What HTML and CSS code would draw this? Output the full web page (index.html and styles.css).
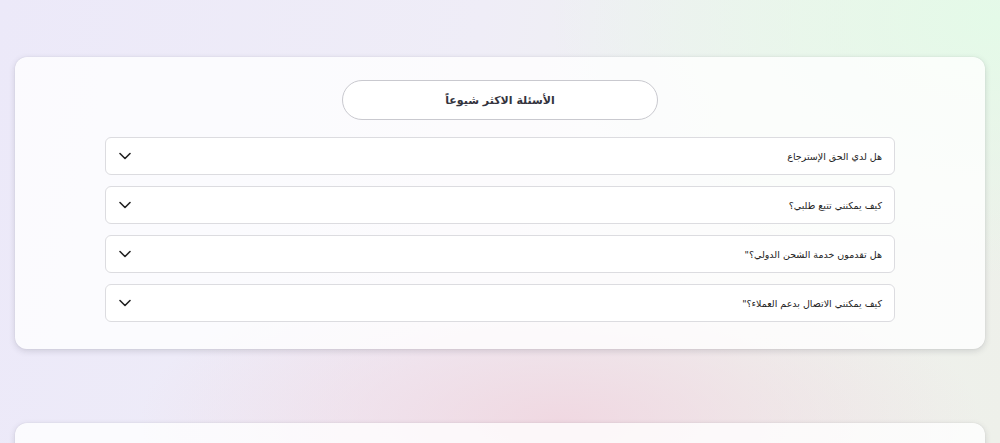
FILE: index.html
```html
<!DOCTYPE html>
<html lang="ar" dir="rtl">
<head>
<meta charset="utf-8">
<link rel="stylesheet" href="styles.css">
</head>
<body>
<div class="page">
  <section class="card">
    <div class="title-pill">الأسئلة الاكثر شيوعاً</div>
    <div class="faq-list">
      <div class="faq-item"><span class="q">هل لدي الحق الإسترجاع</span><svg class="chev" viewBox="0 0 12 8" width="12" height="8"><path d="M1 1.5 6 6.5 11 1.5" fill="none" stroke="#222" stroke-width="1.6" stroke-linecap="round" stroke-linejoin="round"/></svg></div>
      <div class="faq-item"><span class="q">كيف يمكنني تتبع طلبي؟</span><svg class="chev" viewBox="0 0 12 8" width="12" height="8"><path d="M1 1.5 6 6.5 11 1.5" fill="none" stroke="#222" stroke-width="1.6" stroke-linecap="round" stroke-linejoin="round"/></svg></div>
      <div class="faq-item"><span class="q">هل تقدمون خدمة الشحن الدولي؟"</span><svg class="chev" viewBox="0 0 12 8" width="12" height="8"><path d="M1 1.5 6 6.5 11 1.5" fill="none" stroke="#222" stroke-width="1.6" stroke-linecap="round" stroke-linejoin="round"/></svg></div>
      <div class="faq-item"><span class="q">كيف يمكنني الاتصال بدعم العملاء؟"</span><svg class="chev" viewBox="0 0 12 8" width="12" height="8"><path d="M1 1.5 6 6.5 11 1.5" fill="none" stroke="#222" stroke-width="1.6" stroke-linecap="round" stroke-linejoin="round"/></svg></div>
    </div>
  </section>
  <section class="card card-next"></section>
</div>
</body>
</html>
```
FILE: styles.css
```css
* { box-sizing: border-box; }
html, body { margin: 0; padding: 0; }
body {
  width: 1000px;
  height: 443px;
  overflow: hidden;
  font-family: "DejaVu Sans", "Noto Sans", sans-serif;
  color: #2b2b33;
  background:
    radial-gradient(ellipse 420px 160px at 560px 420px, rgba(240, 214, 224, 0.9), rgba(240, 214, 224, 0) 100%),
    radial-gradient(ellipse 450px 260px at 1000px 20px, rgba(228, 250, 232, 1), rgba(228, 250, 232, 0) 100%),
    linear-gradient(100deg, #ece9f9 0%, #efedf7 45%, #eff2ee 75%, #eef0ea 100%);
}
.page {
  padding: 57px 15px 0;
  display: flex;
  flex-direction: column;
  gap: 74px;
}
.card {
  background: rgba(255, 255, 255, 0.78);
  border-radius: 12px;
  box-shadow: 0 2px 6px rgba(60, 60, 80, 0.18), 0 0 1px rgba(60, 60, 80, 0.2);
  padding: 23px 90px 27px;
  display: flex;
  flex-direction: column;
  align-items: center;
}
.card-next { height: 40px; padding: 0; }
.title-pill {
  width: 316px;
  height: 40px;
  border: 1px solid #c9c9cf;
  border-radius: 20px;
  background: #fff;
  display: flex;
  align-items: center;
  justify-content: center;
  font-size: 11px;
  font-weight: bold;
  color: #33333d;
}
.faq-list {
  margin-top: 17px;
  width: 100%;
  display: flex;
  flex-direction: column;
  gap: 11px;
}
.faq-item {
  height: 38px;
  border: 1px solid #dcdce0;
  border-radius: 6px;
  background: #fff;
  display: flex;
  align-items: center;
  justify-content: space-between;
  padding: 0 12px 0 13px;
}
.q { font-size: 9.5px; color: #222; }
.chev { display: block; }
```
